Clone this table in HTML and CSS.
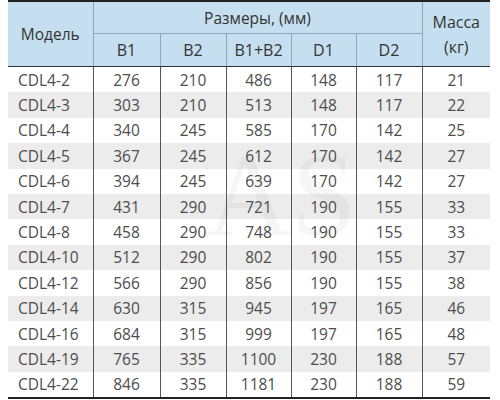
FILE: index.html
```html
<!DOCTYPE html>
<html>
<head>
  <title>CDL4</title>
  <meta charset="utf-8">
  <link rel="stylesheet" href="styles.css">
</head>
<body>
  <div class="wrap">
    <table class="specs">
      <colgroup>
        <col class="c-model">
        <col class="c-b1">
        <col class="c-b2">
        <col class="c-sum">
        <col class="c-d1">
        <col class="c-d2">
        <col class="c-mass">
      </colgroup>
      <thead>
        <tr class="h1">
          <th rowspan="2">Модель</th>
          <th colspan="5">Размеры, (мм)</th>
          <th rowspan="2" class="mass">Масса<br>(кг)</th>
        </tr>
        <tr class="h2">
          <th>B1</th>
          <th>B2</th>
          <th>B1+B2</th>
          <th>D1</th>
          <th>D2</th>
        </tr>
      </thead>
      <tbody>
        <tr><td>CDL4-2</td><td>276</td><td>210</td><td>486</td><td>148</td><td>117</td><td>21</td></tr>
        <tr><td>CDL4-3</td><td>303</td><td>210</td><td>513</td><td>148</td><td>117</td><td>22</td></tr>
        <tr><td>CDL4-4</td><td>340</td><td>245</td><td>585</td><td>170</td><td>142</td><td>25</td></tr>
        <tr><td>CDL4-5</td><td>367</td><td>245</td><td>612</td><td>170</td><td>142</td><td>27</td></tr>
        <tr><td>CDL4-6</td><td>394</td><td>245</td><td>639</td><td>170</td><td>142</td><td>27</td></tr>
        <tr><td>CDL4-7</td><td>431</td><td>290</td><td>721</td><td>190</td><td>155</td><td>33</td></tr>
        <tr><td>CDL4-8</td><td>458</td><td>290</td><td>748</td><td>190</td><td>155</td><td>33</td></tr>
        <tr><td>CDL4-10</td><td>512</td><td>290</td><td>802</td><td>190</td><td>155</td><td>37</td></tr>
        <tr><td>CDL4-12</td><td>566</td><td>290</td><td>856</td><td>190</td><td>155</td><td>38</td></tr>
        <tr><td>CDL4-14</td><td>630</td><td>315</td><td>945</td><td>197</td><td>165</td><td>46</td></tr>
        <tr><td>CDL4-16</td><td>684</td><td>315</td><td>999</td><td>197</td><td>165</td><td>48</td></tr>
        <tr><td>CDL4-19</td><td>765</td><td>335</td><td>1100</td><td>230</td><td>188</td><td>57</td></tr>
        <tr><td>CDL4-22</td><td>846</td><td>335</td><td>1181</td><td>230</td><td>188</td><td>59</td></tr>
      </tbody>
    </table>
    <div class="watermark">AS</div>
  </div>
</body>
</html>
```

FILE: styles.css
```css
body {
  margin: 0;
  padding: 0 10px 0 8px;
  font-family: 'Open Sans', 'Noto Sans', sans-serif;
  color: #4d4d4d;
  background: #fff;
}

.wrap {
  position: relative;
}

.specs {
  width: 482px;
  border-collapse: collapse;
  table-layout: fixed;
  border-top: 2px solid #222;
  border-bottom: 2px solid #222;
}

.c-model { width: 85px; }
.c-b1 { width: 67px; }
.c-b2 { width: 66px; }
.c-sum { width: 65px; }
.c-d1 { width: 65px; }
.c-d2 { width: 66px; }
.c-mass { width: 68px; }

.specs th {
  background-color: #c6dff0;
  color: #333;
  font-weight: normal;
  font-size: 15.5px;
  padding: 0;
  border: 1px solid #8fa6b8;
  text-align: center;
}

.specs thead tr:first-child th {
  border-top: none;
}

.specs th:first-child {
  border-left: none;
}

.specs th.mass {
  border-right: none;
  font-size: 16px;
  line-height: 25px;
  padding-top: 2px;
}

.specs .h1 th {
  height: 31px;
}

.specs .h2 th {
  height: 32px;
  font-size: 16px;
  border-bottom: 1px solid #333;
}

.specs .h1 th[rowspan] {
  border-bottom: 1px solid #333;
}

.specs td {
  height: 25.4px;
  padding: 0;
  font-size: 15.5px;
  text-align: center;
  border-left: 1px solid #555;
  border-right: 1px solid #555;
}

.specs td:first-child {
  text-align: left;
  padding-left: 10px;
  border-left: none;
}

.specs td:last-child {
  border-right: none;
}

.specs tbody tr:nth-child(even) td {
  background-color: #ececec;
}

.watermark {
  position: absolute;
  left: 198px;
  top: 128px;
  font-family: 'Liberation Serif', serif;
  font-size: 118px;
  color: rgba(0, 0, 0, 0.035);
  pointer-events: none;
}
```
